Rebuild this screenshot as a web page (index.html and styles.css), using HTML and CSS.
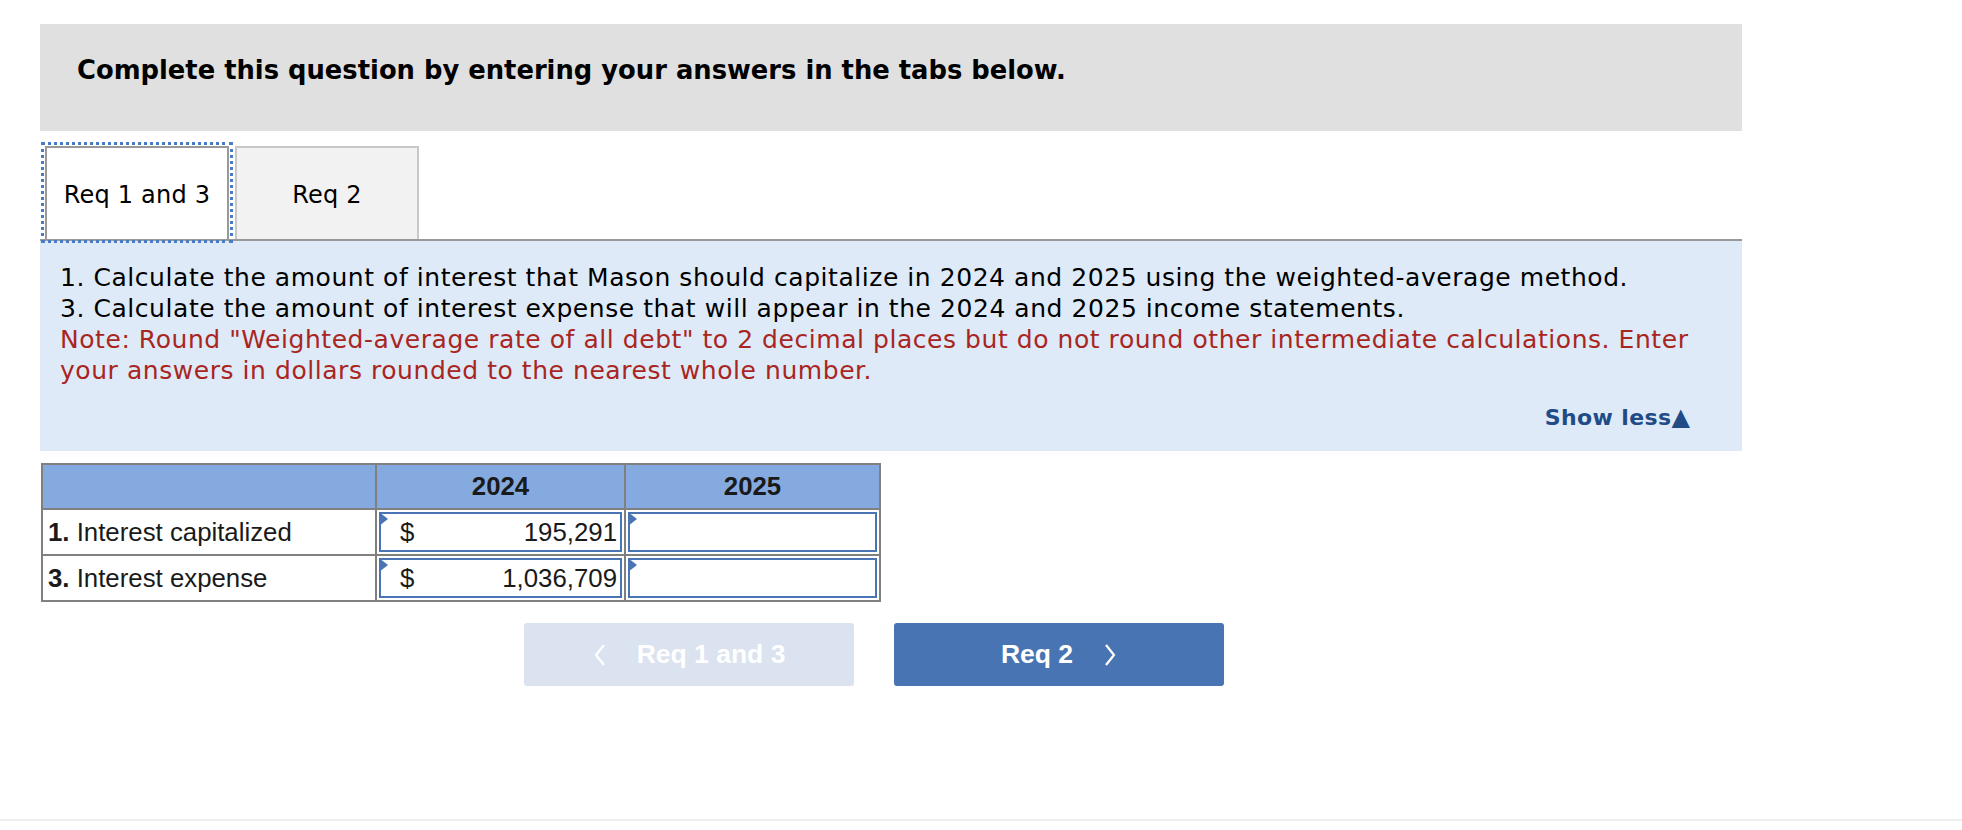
FILE: index.html
```html
<!DOCTYPE html>
<html>
<head>
<meta charset="utf-8">
<link rel="stylesheet" href="styles.css">
</head>
<body>
<div class="page">
  <div class="banner">Complete this question by entering your answers in the tabs below.</div>
  <div class="tabs">
    <div class="tab tab-active">Req 1 and 3</div>
    <div class="tab tab-idle">Req 2</div>
  </div>
  <div class="panel">
    <div class="q">1. Calculate the amount of interest that Mason should capitalize in 2024 and 2025 using the weighted-average method.</div>
    <div class="q">3. Calculate the amount of interest expense that will appear in the 2024 and 2025 income statements.</div>
    <div class="note">Note: Round "Weighted-average rate of all debt" to 2 decimal places but do not round other intermediate calculations. Enter your answers in dollars rounded to the nearest whole number.</div>
    <div class="showless">Show less<span class="tri">▲</span></div>
  </div>
  <table class="grid">
    <tr class="head">
      <th class="c1"></th>
      <th class="c2">2024</th>
      <th class="c3">2025</th>
    </tr>
    <tr>
      <td class="label"><b>1.</b> Interest capitalized</td>
      <td class="cell"><div class="inp"><span class="mark"></span><span class="cur">$</span><span class="val">195,291</span></div></td>
      <td class="cell"><div class="inp"><span class="mark"></span></div></td>
    </tr>
    <tr>
      <td class="label"><b>3.</b> Interest expense</td>
      <td class="cell"><div class="inp"><span class="mark"></span><span class="cur">$</span><span class="val">1,036,709</span></div></td>
      <td class="cell"><div class="inp"><span class="mark"></span></div></td>
    </tr>
  </table>
  <div class="nav">
    <div class="btn btn-prev">
      <svg class="chev" width="14" height="24" viewBox="0 0 14 24"><polyline points="11,2 3,12 11,22" fill="none" stroke="#ffffff" stroke-width="2.2"/></svg>
      <span>Req 1 and 3</span>
    </div>
    <div class="btn btn-next">
      <span>Req 2</span>
      <svg class="chev" width="14" height="24" viewBox="0 0 14 24"><polyline points="3,2 11,12 3,22" fill="none" stroke="#ffffff" stroke-width="2.2"/></svg>
    </div>
  </div>
</div>
<div class="footline"></div>
</body>
</html>
```
FILE: styles.css
```css
html, body {
  margin: 0;
  padding: 0;
  background: #ffffff;
}
body {
  font-family: "DejaVu Sans", Verdana, sans-serif;
  color: #000;
  height: 830px;
  position: relative;
  overflow: hidden;
}
.page {
  padding: 24px 0 0 40px;
  width: 1702px;
}
.banner {
  background: #e0e0e0;
  height: 107px;
  box-sizing: border-box;
  padding: 31px 0 0 37px;
  font-weight: bold;
  font-size: 25.8px;
  line-height: 31px;
}
.tabs {
  display: flex;
  gap: 6px;
  margin-top: 15px;
  padding-left: 5px;
  border-bottom: 2px solid #999999;
  height: 93px;
}
.tab {
  width: 184px;
  height: 93px;
  box-sizing: border-box;
  display: flex;
  align-items: center;
  justify-content: center;
  font-size: 24px;
  letter-spacing: 0.2px;
  padding-top: 2px;
}
.tab-active {
  background: #ffffff;
  border: 2px solid #999999;
  border-bottom: none;
  outline: 3px dotted #4a7cc6;
  outline-offset: 1px;
}
.tab-idle {
  background: #f2f2f2;
  border: 2px solid #c8c8c8;
  border-bottom: none;
}
.panel {
  background: #deeaf7;
  padding: 21px 42px 18px 20px;
  font-size: 25px;
  letter-spacing: 0.55px;
  line-height: 31px;
}
.note {
  color: #a8261f;
}
.showless {
  margin-top: 16px;
  margin-right: 10px;
  text-align: right;
  font-weight: bold;
  font-size: 22px;
  letter-spacing: 0.4px;
  color: #214b87;
}
.tri {
  font-size: 24px;
  letter-spacing: 0;
}
.grid {
  margin-top: 12px;
  margin-left: 1px;
  border-collapse: collapse;
  font-family: "Liberation Sans", Arial, sans-serif;
  font-size: 25.8px;
}
.grid th, .grid td {
  border: 2px solid #808080;
  padding: 0;
}
.head th {
  height: 43px;
  background: #84aadf;
  font-weight: bold;
  color: #1a1a1a;
  text-align: center;
}
.c1 { width: 332px; }
.c2 { width: 247px; }
.c3 { width: 253px; }
.label {
  padding-left: 5px !important;
  color: #1a1a1a;
}
.cell {
  padding: 2px !important;
}
.inp {
  position: relative;
  height: 40px;
  box-sizing: border-box;
  border: 2px solid #4a74b4;
  display: flex;
  align-items: center;
  padding: 0 3px 0 19px;
  color: #1a1a1a;
}
.val {
  margin-left: auto;
}
.mark {
  position: absolute;
  left: -2px;
  top: -2px;
  width: 0;
  height: 0;
  border-top: 7px solid transparent;
  border-bottom: 7px solid transparent;
  border-left: 9px solid #4a74b4;
}
.nav {
  display: flex;
  gap: 40px;
  margin-top: 21px;
  padding-left: 484px;
}
.btn {
  width: 330px;
  height: 63px;
  border-radius: 3px;
  display: flex;
  align-items: center;
  justify-content: center;
  gap: 30px;
  color: #ffffff;
  font-family: "Liberation Sans", Arial, sans-serif;
  font-weight: bold;
  font-size: 26.5px;
}
.btn-prev {
  background: #dae3ef;
}
.btn-next {
  background: #4874b3;
}
.footline {
  position: absolute;
  left: 0;
  right: 0;
  top: 819px;
  height: 2px;
  background: #eeeeee;
}
```
